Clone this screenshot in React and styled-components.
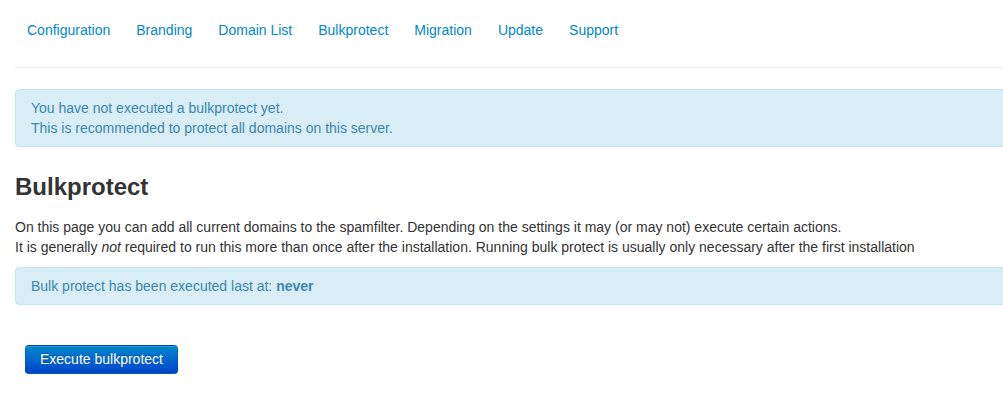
import React from "react";
import styled, { createGlobalStyle } from "styled-components";

const Global = createGlobalStyle`
  html, body { margin: 0; padding: 0; background: #fff; overflow: hidden; }
  body {
    font-family: "Liberation Sans", Arial, Helvetica, sans-serif;
    font-size: 14px;
    line-height: 20px;
    color: #333;
  }
`;

const Page = styled.div`
  width: 1020px;
  padding: 12px 0 0 15px;
  box-sizing: border-box;
`;

const Nav = styled.ul`
  display: flex;
  list-style: none;
  margin: 0;
  padding: 0 0 19px 0;
  border-bottom: 1px solid #eee;
`;

const NavItem = styled.li`
  margin-right: 2px;
`;

const NavLink = styled.a`
  display: block;
  padding: 8px 12px;
  color: #0088cc;
  text-decoration: none;
  line-height: 20px;
  cursor: pointer;
`;

const Alert = styled.div`
  margin: ${(p) => p.$mt || 0}px 0 0 0;
  padding: 8px 15px;
  background: #d9edf7;
  border: 1px solid #bce8f1;
  border-radius: 4px;
  color: #3a87ad;
  line-height: 20px;
`;

const Heading = styled.h3`
  margin: 20px 0 10px;
  font-size: 24px;
  line-height: 40px;
  font-weight: bold;
  color: #333;
`;

const Para = styled.p`
  margin: 0 0 10px;
`;

const ButtonRow = styled.div`
  padding: 40px 0 0 10px;
`;

const PrimaryButton = styled.button`
  font-family: inherit;
  font-size: 14px;
  line-height: 19px;
  padding: 4px 14px;
  color: #fff;
  text-shadow: 0 -1px 0 rgba(0, 0, 0, 0.25);
  background-color: #006dcc;
  background-image: linear-gradient(to bottom, #0088cc, #0044cc);
  border: 1px solid;
  border-color: rgba(0, 0, 0, 0.1) rgba(0, 0, 0, 0.1) rgba(0, 0, 0, 0.25);
  border-radius: 4px;
  box-shadow: inset 0 1px 0 rgba(255, 255, 255, 0.2), 0 1px 2px rgba(0, 0, 0, 0.05);
  cursor: pointer;
`;

const links = ["Configuration", "Branding", "Domain List", "Bulkprotect", "Migration", "Update", "Support"];

export default function App() {
  return (
    <>
      <Global />
      <Page>
        <Nav>
          {links.map((l) => (
            <NavItem key={l}>
              <NavLink>{l}</NavLink>
            </NavItem>
          ))}
        </Nav>
        <Alert $mt={21}>
          You have not executed a bulkprotect yet.
          <br />
          This is recommended to protect all domains on this server.
        </Alert>
        <Heading>Bulkprotect</Heading>
        <Para>
          On this page you can add all current domains to the spamfilter. Depending on the settings it may (or may not) execute certain actions.
          <br />
          It is generally <em>not</em> required to run this more than once after the installation. Running bulk protect is usually only necessary after the first installation
        </Para>
        <Alert>
          Bulk protect has been executed last at: <b>never</b>
        </Alert>
        <ButtonRow>
          <PrimaryButton>Execute bulkprotect</PrimaryButton>
        </ButtonRow>
      </Page>
    </>
  );
}
